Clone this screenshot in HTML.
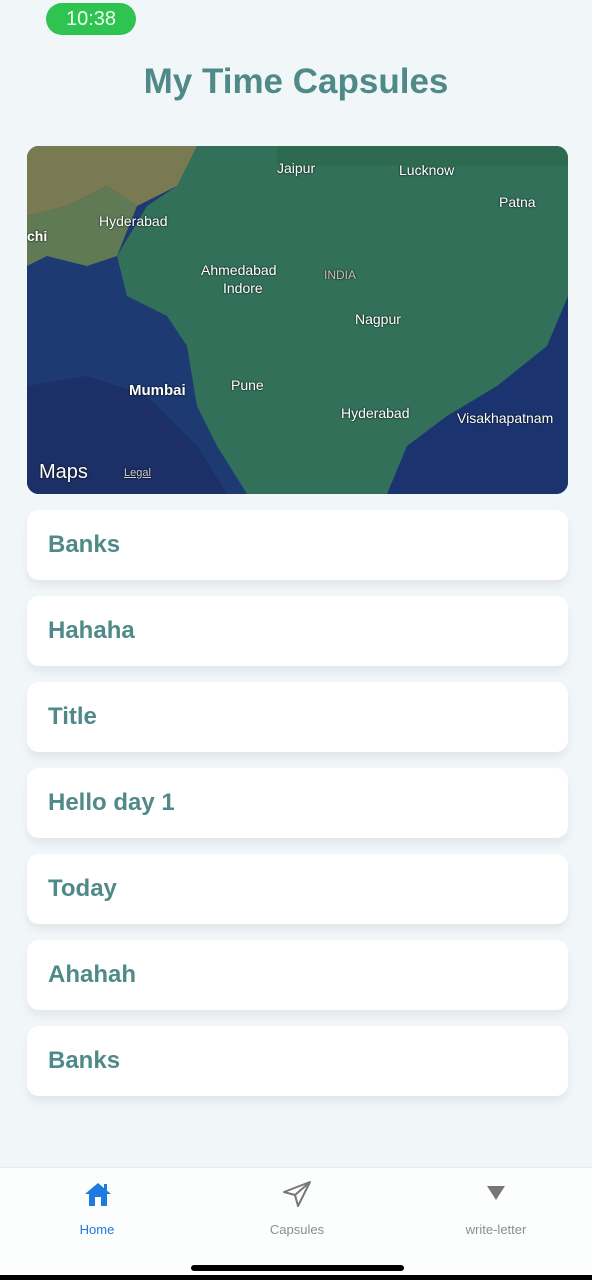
<!DOCTYPE html>
<html><head><meta charset="utf-8"><style>
*{margin:0;padding:0;box-sizing:border-box}
body{width:592px;height:1280px;background:#f1f6f9;font-family:"Liberation Sans",sans-serif;position:relative;overflow:hidden}
.time{position:absolute;left:46px;top:3px;width:90px;height:32px;border-radius:16px;background:#2fc451;color:#eaffea;font-size:20px;text-align:center;line-height:32px}
h1{position:absolute;top:62px;width:100%;text-align:center;font-size:35px;font-weight:bold;color:#4f8a89}
.map{position:absolute;left:27px;top:146px;width:541px;height:348px;border-radius:12px;overflow:hidden;background:#2f6a55}
.map span{position:absolute;color:#fff;font-size:14px;text-shadow:0 0 2px #000}
.card{position:absolute;left:27px;width:541px;height:70px;background:#fff;border-radius:12px;box-shadow:0 6px 8px rgba(0,0,0,.06)}
.card b{position:absolute;left:21px;top:50%;transform:translateY(-50%);font-size:24px;color:#4f8a89}
.nav{position:absolute;left:0;top:1167px;width:592px;height:113px;background:#fcfdfd;border-top:1px solid #e6ecef}
.nav div{position:absolute;top:54px;font-size:13px;color:#8a8f93;transform:translateX(-50%)}
</style></head><body>
<div class="time">10:38</div>
<h1>My Time Capsules</h1>
<div class="map">
<svg width="541" height="348" style="position:absolute;left:0;top:0">
<rect width="541" height="348" fill="#33705a"/>
<path d="M0 0H170L150 40 120 60 90 110 100 150 140 170 160 200 170 260 190 300 220 348H0Z" fill="#1d3a73"/>
<path d="M0 0H170L150 40 110 60 80 40 40 60 0 70Z" fill="#7a7a52"/>
<path d="M0 70L40 60 80 40 110 60 90 110 60 120 20 110 0 120Z" fill="#5f7a55"/>
<path d="M541 150L520 200 470 240 420 270 380 300 360 348H541Z" fill="#1b3470"/>
<path d="M0 240L60 230 120 250 170 300 200 348H0Z" fill="#1c2f66"/>
<path d="M250 0H541V20H250Z" fill="#2e6a50"/>
</svg>
<span style="left:250px;top:14px">Jaipur</span>
<span style="left:372px;top:16px">Lucknow</span>
<span style="left:472px;top:48px">Patna</span>
<span style="left:72px;top:67px">Hyderabad</span>
<span style="left:0;top:82px;font-weight:bold">chi</span>
<span style="left:174px;top:116px">Ahmedabad</span>
<span style="left:196px;top:134px">Indore</span>
<span style="left:297px;top:122px;font-size:12px;color:#cbb">INDIA</span>
<span style="left:328px;top:165px">Nagpur</span>
<span style="left:102px;top:236px;font-weight:bold;font-size:15px">Mumbai</span>
<span style="left:204px;top:231px">Pune</span>
<span style="left:314px;top:259px">Hyderabad</span>
<span style="left:430px;top:264px">Visakhapatnam</span>
<span style="left:12px;top:315px;font-size:20px"> Maps</span>
<span style="left:97px;top:321px;font-size:11px;text-decoration:underline;color:#ccc">Legal</span>
</div>
<div class="card" style="top:510px"><b style="top:35px">Banks</b></div>
<div class="card" style="top:596px"><b>Hahaha</b></div>
<div class="card" style="top:682px"><b>Title</b></div>
<div class="card" style="top:768px"><b>Hello day 1</b></div>
<div class="card" style="top:854px"><b>Today</b></div>
<div class="card" style="top:940px"><b>Ahahah</b></div>
<div class="card" style="top:1026px"><b>Banks</b></div>
<div class="nav">
<svg style="position:absolute;left:84px;top:13px" width="28" height="26" viewBox="0 0 28 26"><path d="M14 2L1 13h4v12h18V13h4z" fill="#1f7ae0"/><rect x="11" y="16" width="6" height="9" fill="#fff"/><rect x="20" y="3" width="3" height="6" fill="#1f7ae0"/></svg>
<svg style="position:absolute;left:282px;top:12px" width="30" height="28" viewBox="0 0 30 28"><path d="M28 2L2 12l11 3 3 11z M28 2L13 15" fill="none" stroke="#777" stroke-width="2" stroke-linejoin="round"/></svg>
<svg style="position:absolute;left:486px;top:17px" width="20" height="16"><path d="M1 1H19L10 15z" fill="#777"/></svg>
<div style="left:97px;color:#1f7ae0">Home</div>
<div style="left:297px">Capsules</div>
<div style="left:496px">write-letter</div>
</div>
<div style="position:absolute;left:191px;top:1265px;width:213px;height:6px;border-radius:3px;background:#000"></div>
<div style="position:absolute;left:0;top:1275px;width:592px;height:5px;background:#000"></div>
</body></html>
